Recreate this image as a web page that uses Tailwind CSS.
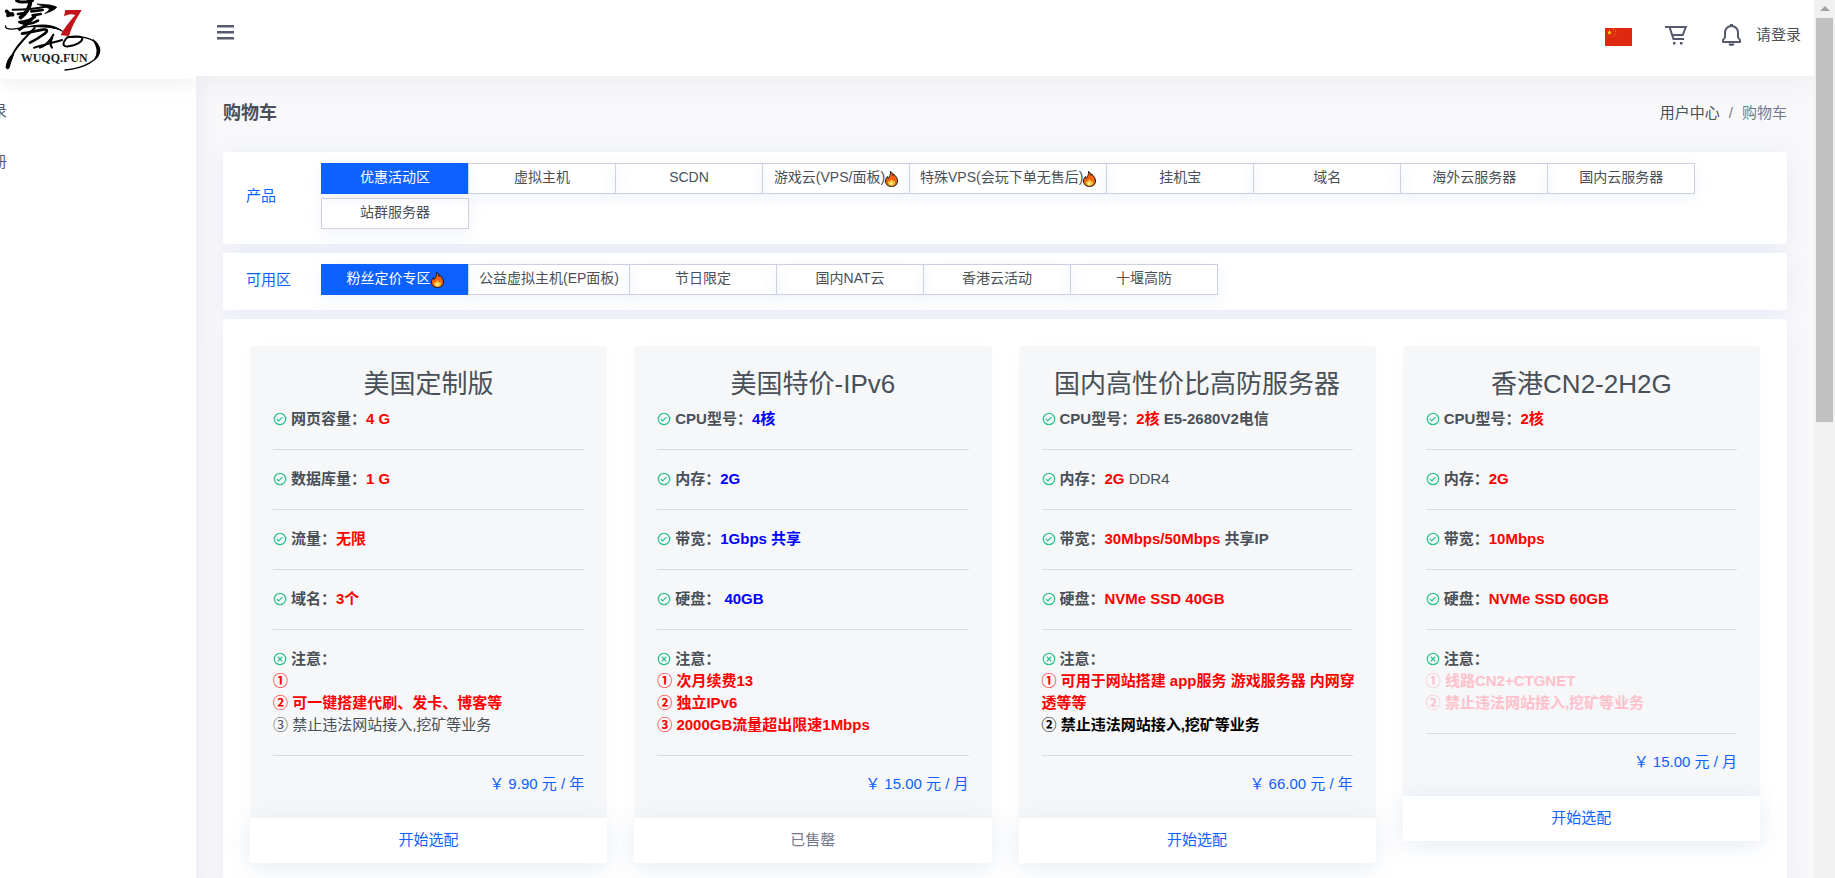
<!DOCTYPE html>
<html lang="zh-CN">
  <head>
    <meta charset="utf-8" />
    <meta content="width=device-width, initial-scale=1" name="viewport" />
    <title>购物车</title>
    <script src="https://cdn.jsdelivr.net/npm/@tailwindcss/browser@4"></script>
    <style>
      body {
        font-family: "Liberation Sans", "Noto Sans CJK SC", sans-serif;
      }
    </style>
  </head>

  <body class="flex h-screen overflow-hidden bg-[#f8f8fb] text-[15px] leading-[22px] text-[#495057]">
    <!-- shared icons -->
    <svg class="hidden">
      <symbol id="check" viewBox="1 1 22 22">
        <path d="M12 2a10 10 0 1 0 0 20 10 10 0 0 0 0-20zm0 18a8 8 0 1 1 0-16 8 8 0 0 1 0 16z" />
        <path d="m10 13.600-2.300-2.300-1.400 1.400 3.700 3.700 6.700-6.700-1.400-1.400z" />
      </symbol>
      <symbol id="cross" viewBox="1 1 22 22">
        <path d="M12 2a10 10 0 1 0 0 20 10 10 0 0 0 0-20zm0 18a8 8 0 1 1 0-16 8 8 0 0 1 0 16z" />
        <path d="M14.800 7.800 12 10.600 9.200 7.800 7.800 9.200l2.800 2.800-2.800 2.800 1.400 1.400 2.800-2.800 2.800 2.800 1.400-1.400-2.800-2.800 2.800-2.800z" />
      </symbol>
      <symbol id="fire" viewBox="0 0 26 32">
        <path d="M11 1c4 2 5 5 5 8 1-1 1-2 1-3 5 4 8 9 8 14 0 7-5 11-12 11S1 27 1 20c0-4 2-7 4-9 0 2 0 3 1 4 3-4 6-8 5-14z" fill="#f7630c" stroke="#1b1b1b" stroke-width="2" />
        <path d="M7 20c1 1 2 1 3 0 1-1 2-2 3-4 1 2 2 3 4 5 1 0 1-1 2-2 2 6 0 10-6 10S5 25 7 20z" fill="#ffc83d" />
        <path d="M12 22c2 2 4 3 3 5-1 2-4 2-5 0s1-3 2-5z" fill="#fff3a0" />
      </symbol>
    </svg>

    <aside class="flex w-[196px] shrink-0 flex-col overflow-hidden bg-white">
      <a href="#" class="block h-[79px] shrink-0 bg-white shadow-[0_6px_20px_rgba(0,0,0,0.06)]">
        <svg class="h-[72px] w-[105px]" viewBox="0 0 315 216" fill="none" stroke="#000" stroke-linecap="round" stroke-linejoin="round">
          <path d="M50 2C62 9 82 6 98 1" stroke-width="9" />
          <path d="M38 29C76 29 120 24 150 17" stroke-width="6" />
          <path d="M112 12C134 13 158 15 170 21C168 28 154 34 134 41C146 33 150 28 146 25C136 20 122 18 112 12Z" fill="#000" stroke-width="2" />
          <path d="M92 2C90 18 80 38 62 52" stroke-width="12" />
          <path d="M20 34C24 40 30 44 38 44M24 46L36 42" stroke-width="11" />
          <path d="M54 42L74 39M94 34L128 30M98 46L122 42" stroke-width="8" />
          <path d="M105 50C92 60 76 66 58 66C76 74 98 72 114 62" stroke-width="8" />
          <path d="M17 78C14 92 46 88 84 80" stroke-width="4" />
          <path d="M84 80C120 73 158 70 188 94C166 80 120 80 84 80Z" fill="#000" stroke-width="3" />
          <path d="M100 52C86 70 72 80 58 88" stroke-width="9" />
          <path d="M66 101C86 98 106 93 128 89C148 86 142 96 128 105C116 114 102 122 90 128" stroke-width="8" />
          <path d="M104 84C80 108 54 134 42 156C34 172 28 186 24 200" stroke-width="6" />
          <path d="M36 164C26 172 20 188 18 202C20 208 26 208 28 202C30 190 36 178 40 164Z" fill="#000" stroke-width="3" />
          <path d="M102 143C130 136 156 128 186 120" stroke-width="6" />
          <path d="M160 104C150 122 138 136 120 143M157 112C152 124 148 134 156 143" stroke-width="6" />
          <path d="M202 112C186 128 186 142 206 139C228 136 246 126 247 116C248 108 224 108 202 112" stroke-width="6" />
          <path d="M214 112C256 106 294 120 299 148C302 178 252 206 195 210" stroke-width="4" />
          <path d="M280 120C302 138 302 162 284 178C296 160 294 140 280 120Z" fill="#000" stroke-width="4" />
          <path d="M196 30L245 30L238 42C226 60 215 82 207 108L182 106C190 88 206 68 226 45C212 40 202 44 192 49Z" fill="#c01418" stroke="none" />
          <text x="62" y="187" fill="#222" stroke="none" font-size="36" font-weight="700" font-family="Liberation Serif, serif">WUQQ.FUN</text>
        </svg>
      </a>
      <nav class="-ml-[23px] flex flex-col gap-[29px] pt-[21px] text-[#545a6d]">
        <a href="#">登录</a>
        <a href="#">注册</a>
      </nav>
    </aside>

    <div class="flex min-w-0 flex-1 flex-col overflow-hidden">
      <header class="relative z-10 flex h-[76px] shrink-0 items-center bg-white pr-[13px] pl-[21px] shadow-[0_8px_24px_rgba(0,0,0,0.04)]">
        <button type="button" aria-label="菜单" class="mb-3">
          <svg class="h-[18px] w-[17px]" viewBox="0 0 17 18" fill="#555b6d">
            <path d="M0 2h17v2.400H0zM0 8h17v2.400H0zM0 14h17v2.400H0z" />
          </svg>
        </button>
        <div class="ml-auto flex items-center pb-[6px]">
          <button type="button" aria-label="语言" class="mr-[33px]">
            <svg class="mt-1 h-[18px] w-[27px]" viewBox="0 0 30 20">
              <path fill="#de2910" d="M0 0h30v20H0z" />
              <path fill="#ffde00" d="m5 2 .7 2.100h2.200L6.100 5.400l.7 2.100L5 6.200 3.200 7.500l.7-2.100-1.800-1.300h2.200z" />
              <path fill="#ffde00" d="M9.500 1.200h1v1h-1zM11.500 3.200h1v1h-1zM11.500 6h1v1h-1zM9.500 8.200h1v1h-1z" />
            </svg>
          </button>
          <a href="#" aria-label="购物车" class="mr-[33px]">
            <svg class="h-[22px] w-[23px]" viewBox="0 0 23 22" fill="none" stroke="#555b6d" stroke-width="2">
              <path d="M0 3h4.500l4 12H19M4.500 3h16.300l-3 8H7.500" />
              <path d="M8 18h2.500v2.500H8zM15 18h2.500v2.500H15z" fill="#555b6d" stroke="none" />
            </svg>
          </a>
          <button type="button" aria-label="通知" class="mr-[14px]">
            <svg class="h-[22px] w-[21px]" viewBox="0 0 21 22" fill="none" stroke="#555b6d" stroke-width="2">
              <path d="M10.500 2c-4 0-6.500 3-6.500 6.500v5L2 16v2h17v-2l-2-2.500v-5C17 5 14.500 2 10.500 2z" stroke-linejoin="round" />
              <path d="M7.500 19.500a3 2.500 0 0 0 6 0zM9 0h3v2H9z" fill="#555b6d" stroke="none" />
            </svg>
          </button>
          <a href="#">请登录</a>
        </div>
      </header>

      <main class="flex min-h-0 flex-1 flex-col gap-[9px] px-[27px] shadow-[inset_24px_0_24px_-24px_rgba(18,38,90,0.08)]">
        <div class="mb-[6px] flex items-center justify-between pt-[25px] pb-3">
          <h4 class="text-[18px] leading-6 font-bold">购物车</h4>
          <nav class="flex gap-[9px]">
            <a href="#">用户中心</a>
            <span class="text-[#74788d]">/</span>
            <span class="text-[#74788d]">购物车</span>
          </nav>
        </div>

        <section class="flex shrink-0 items-center bg-white px-[23px] pt-[11px] pb-[15px] shadow-[0_4px_24px_rgba(40,90,200,0.07)]">
          <h5 class="w-[75px] shrink-0 text-[#0d61ff]">产品</h5>
          <div class="flex flex-wrap gap-y-1 pl-px text-[14px]">
            <button type="button" class="-ml-px h-[31px] min-w-[148px] border border-[#0d61ff] bg-[#0d61ff] px-2.5 pb-1 text-white shadow-[0_4px_16px_rgba(40,90,200,0.07)]">优惠活动区</button>
            <button type="button" class="-ml-px h-[31px] min-w-[148px] border border-[#ced0e2] px-2.5 pb-1 shadow-[0_4px_16px_rgba(40,90,200,0.07)]">虚拟主机</button>
            <button type="button" class="-ml-px h-[31px] min-w-[148px] border border-[#ced0e2] px-2.5 pb-1 shadow-[0_4px_16px_rgba(40,90,200,0.07)]">SCDN</button>
            <button type="button" class="-ml-px flex h-[31px] min-w-[148px] items-center justify-center border border-[#ced0e2] px-2.5 pb-1 shadow-[0_4px_16px_rgba(40,90,200,0.07)]">游戏云(VPS/面板)<svg class="mt-1 h-4 w-[13px]"><use href="#fire" /></svg></button>
            <button type="button" class="-ml-px flex h-[31px] min-w-[148px] items-center justify-center border border-[#ced0e2] px-2.5 pb-1 shadow-[0_4px_16px_rgba(40,90,200,0.07)]">特殊VPS(会玩下单无售后)<svg class="mt-1 h-4 w-[13px]"><use href="#fire" /></svg></button>
            <button type="button" class="-ml-px h-[31px] min-w-[148px] border border-[#ced0e2] px-2.5 pb-1 shadow-[0_4px_16px_rgba(40,90,200,0.07)]">挂机宝</button>
            <button type="button" class="-ml-px h-[31px] min-w-[148px] border border-[#ced0e2] px-2.5 pb-1 shadow-[0_4px_16px_rgba(40,90,200,0.07)]">域名</button>
            <button type="button" class="-ml-px h-[31px] min-w-[148px] border border-[#ced0e2] px-2.5 pb-1 shadow-[0_4px_16px_rgba(40,90,200,0.07)]">海外云服务器</button>
            <button type="button" class="-ml-px h-[31px] min-w-[148px] border border-[#ced0e2] px-2.5 pb-1 shadow-[0_4px_16px_rgba(40,90,200,0.07)]">国内云服务器</button>
            <button type="button" class="-ml-px h-[31px] min-w-[148px] border border-[#ced0e2] px-2.5 pb-1 shadow-[0_4px_16px_rgba(40,90,200,0.07)]">站群服务器</button>
          </div>
        </section>

        <section class="flex shrink-0 items-center bg-white px-[23px] pt-[11px] pb-[15px] shadow-[0_4px_24px_rgba(40,90,200,0.07)]">
          <h5 class="w-[75px] shrink-0 text-[#0d61ff]">可用区</h5>
          <div class="flex flex-wrap gap-y-1 pl-px text-[14px]">
            <button type="button" class="-ml-px flex h-[31px] min-w-[148px] items-center justify-center border border-[#0d61ff] bg-[#0d61ff] px-2.5 pb-1 text-white shadow-[0_4px_16px_rgba(40,90,200,0.07)]">粉丝定价专区<svg class="mt-1 h-4 w-[13px]"><use href="#fire" /></svg></button>
            <button type="button" class="-ml-px h-[31px] min-w-[148px] border border-[#ced0e2] px-2.5 pb-1 shadow-[0_4px_16px_rgba(40,90,200,0.07)]">公益虚拟主机(EP面板)</button>
            <button type="button" class="-ml-px h-[31px] min-w-[148px] border border-[#ced0e2] px-2.5 pb-1 shadow-[0_4px_16px_rgba(40,90,200,0.07)]">节日限定</button>
            <button type="button" class="-ml-px h-[31px] min-w-[148px] border border-[#ced0e2] px-2.5 pb-1 shadow-[0_4px_16px_rgba(40,90,200,0.07)]">国内NAT云</button>
            <button type="button" class="-ml-px h-[31px] min-w-[148px] border border-[#ced0e2] px-2.5 pb-1 shadow-[0_4px_16px_rgba(40,90,200,0.07)]">香港云活动</button>
            <button type="button" class="-ml-px h-[31px] min-w-[148px] border border-[#ced0e2] px-2.5 pb-1 shadow-[0_4px_16px_rgba(40,90,200,0.07)]">十堰高防</button>
          </div>
        </section>

        <section class="grid flex-1 shrink-0 grid-cols-4 items-start gap-[27px] rounded-t bg-white p-[27px] shadow-[0_4px_24px_rgba(40,90,200,0.06)]">
          <article class="rounded bg-[#f5f7f9] shadow-[0_4px_24px_rgba(0,0,0,0.02)]">
            <div class="px-[23px] pt-[22px] pb-6">
              <h3 class="mb-2 text-center text-[26px] leading-8">美国定制版</h3>
              <p class="font-bold"><svg class="mr-1 inline size-[14px] align-[-2px]" fill="#34c38f"><use href="#check" /></svg>网页容量：<span class="text-[#f00]">4 G</span></p>
              <hr class="mt-[19px] mb-[18px] border-[#dadce0]" />
              <p class="font-bold"><svg class="mr-1 inline size-[14px] align-[-2px]" fill="#34c38f"><use href="#check" /></svg>数据库量：<span class="text-[#f00]">1 G</span></p>
              <hr class="mt-[19px] mb-[18px] border-[#dadce0]" />
              <p class="font-bold"><svg class="mr-1 inline size-[14px] align-[-2px]" fill="#34c38f"><use href="#check" /></svg>流量：<span class="text-[#f00]">无限</span></p>
              <hr class="mt-[19px] mb-[18px] border-[#dadce0]" />
              <p class="font-bold"><svg class="mr-1 inline size-[14px] align-[-2px]" fill="#34c38f"><use href="#check" /></svg>域名：<span class="text-[#f00]">3个</span></p>
              <hr class="mt-[19px] mb-[18px] border-[#dadce0]" />
              <p class="font-bold"><svg class="mr-1 inline size-[14px] align-[-2px]" fill="#34c38f"><use href="#cross" /></svg>注意：</p>
              <p class="font-bold text-[#f00]">①</p>
              <p class="font-bold text-[#f00]">② 可一键搭建代刷、发卡、博客等</p>
              <p>③ 禁止违法网站接入,挖矿等业务</p>
              <hr class="mt-[19px] mb-[18px] border-[#dadce0]" />
              <p class="text-right leading-5 text-[#0d61ff]">￥ 9.90 元 / 年</p>
            </div>
            <a href="#" class="block bg-white pt-[11px] pb-3 text-center text-[#0d61ff] shadow-[0_4px_24px_rgba(40,90,180,0.1)]">开始选配</a>
          </article>

          <article class="rounded bg-[#f5f7f9] shadow-[0_4px_24px_rgba(0,0,0,0.02)]">
            <div class="px-[23px] pt-[22px] pb-6">
              <h3 class="mb-2 text-center text-[26px] leading-8">美国特价-IPv6</h3>
              <p class="font-bold"><svg class="mr-1 inline size-[14px] align-[-2px]" fill="#34c38f"><use href="#check" /></svg>CPU型号：<span class="text-[#00f]">4核</span></p>
              <hr class="mt-[19px] mb-[18px] border-[#dadce0]" />
              <p class="font-bold"><svg class="mr-1 inline size-[14px] align-[-2px]" fill="#34c38f"><use href="#check" /></svg>内存：<span class="text-[#00f]">2G</span></p>
              <hr class="mt-[19px] mb-[18px] border-[#dadce0]" />
              <p class="font-bold"><svg class="mr-1 inline size-[14px] align-[-2px]" fill="#34c38f"><use href="#check" /></svg>带宽：<span class="text-[#00f]">1Gbps 共享</span></p>
              <hr class="mt-[19px] mb-[18px] border-[#dadce0]" />
              <p class="font-bold"><svg class="mr-1 inline size-[14px] align-[-2px]" fill="#34c38f"><use href="#check" /></svg>硬盘：<span class="text-[#00f]"> 40GB</span></p>
              <hr class="mt-[19px] mb-[18px] border-[#dadce0]" />
              <p class="font-bold"><svg class="mr-1 inline size-[14px] align-[-2px]" fill="#34c38f"><use href="#cross" /></svg>注意：</p>
              <p class="font-bold text-[#f00]">① 次月续费13</p>
              <p class="font-bold text-[#f00]">② 独立IPv6</p>
              <p class="font-bold text-[#f00]">③ 2000GB流量超出限速1Mbps</p>
              <hr class="mt-[19px] mb-[18px] border-[#dadce0]" />
              <p class="text-right leading-5 text-[#0d61ff]">￥ 15.00 元 / 月</p>
            </div>
            <a class="block bg-white pt-[11px] pb-3 text-center text-[#74788d] shadow-[0_4px_24px_rgba(40,90,180,0.1)]">已售罄</a>
          </article>

          <article class="rounded bg-[#f5f7f9] shadow-[0_4px_24px_rgba(0,0,0,0.02)]">
            <div class="px-[23px] pt-[22px] pb-6">
              <h3 class="mb-2 text-center text-[26px] leading-8">国内高性价比高防服务器</h3>
              <p class="font-bold"><svg class="mr-1 inline size-[14px] align-[-2px]" fill="#34c38f"><use href="#check" /></svg>CPU型号：<span class="text-[#f00]">2核</span> E5-2680V2电信</p>
              <hr class="mt-[19px] mb-[18px] border-[#dadce0]" />
              <p><b><svg class="mr-1 inline size-[14px] align-[-2px]" fill="#34c38f"><use href="#check" /></svg>内存：<span class="text-[#f00]">2G</span></b> DDR4</p>
              <hr class="mt-[19px] mb-[18px] border-[#dadce0]" />
              <p class="font-bold"><svg class="mr-1 inline size-[14px] align-[-2px]" fill="#34c38f"><use href="#check" /></svg>带宽：<span class="text-[#f00]">30Mbps/50Mbps</span> 共享IP</p>
              <hr class="mt-[19px] mb-[18px] border-[#dadce0]" />
              <p class="font-bold"><svg class="mr-1 inline size-[14px] align-[-2px]" fill="#34c38f"><use href="#check" /></svg>硬盘：<span class="text-[#f00]">NVMe SSD 40GB</span></p>
              <hr class="mt-[19px] mb-[18px] border-[#dadce0]" />
              <p class="font-bold"><svg class="mr-1 inline size-[14px] align-[-2px]" fill="#34c38f"><use href="#cross" /></svg>注意：</p>
              <p class="font-bold whitespace-nowrap text-[#f00]">① 可用于网站搭建 app服务 游戏服务器 内网穿<br />透等等</p>
              <p class="font-bold text-black">② 禁止违法网站接入,挖矿等业务</p>
              <hr class="mt-[19px] mb-[18px] border-[#dadce0]" />
              <p class="text-right leading-5 text-[#0d61ff]">￥ 66.00 元 / 年</p>
            </div>
            <a href="#" class="block bg-white pt-[11px] pb-3 text-center text-[#0d61ff] shadow-[0_4px_24px_rgba(40,90,180,0.1)]">开始选配</a>
          </article>

          <article class="rounded bg-[#f5f7f9] shadow-[0_4px_24px_rgba(0,0,0,0.02)]">
            <div class="px-[23px] pt-[22px] pb-6">
              <h3 class="mb-2 text-center text-[26px] leading-8">香港CN2-2H2G</h3>
              <p class="font-bold"><svg class="mr-1 inline size-[14px] align-[-2px]" fill="#34c38f"><use href="#check" /></svg>CPU型号：<span class="text-[#f00]">2核</span></p>
              <hr class="mt-[19px] mb-[18px] border-[#dadce0]" />
              <p class="font-bold"><svg class="mr-1 inline size-[14px] align-[-2px]" fill="#34c38f"><use href="#check" /></svg>内存：<span class="text-[#f00]">2G</span></p>
              <hr class="mt-[19px] mb-[18px] border-[#dadce0]" />
              <p class="font-bold"><svg class="mr-1 inline size-[14px] align-[-2px]" fill="#34c38f"><use href="#check" /></svg>带宽：<span class="text-[#f00]">10Mbps</span></p>
              <hr class="mt-[19px] mb-[18px] border-[#dadce0]" />
              <p class="font-bold"><svg class="mr-1 inline size-[14px] align-[-2px]" fill="#34c38f"><use href="#check" /></svg>硬盘：<span class="text-[#f00]">NVMe SSD 60GB</span></p>
              <hr class="mt-[19px] mb-[18px] border-[#dadce0]" />
              <p class="font-bold"><svg class="mr-1 inline size-[14px] align-[-2px]" fill="#34c38f"><use href="#cross" /></svg>注意：</p>
              <p class="font-bold text-[#ffc0cb]">① 线路CN2+CTGNET</p>
              <p class="font-bold text-[#ffc0cb]">② 禁止违法网站接入,挖矿等业务</p>
              <hr class="mt-[19px] mb-[18px] border-[#dadce0]" />
              <p class="text-right leading-5 text-[#0d61ff]">￥ 15.00 元 / 月</p>
            </div>
            <a href="#" class="block bg-white pt-[11px] pb-3 text-center text-[#0d61ff] shadow-[0_4px_24px_rgba(40,90,180,0.1)]">开始选配</a>
          </article>
        </section>
      </main>
    </div>

    <!-- scrollbar -->
    <div class="z-20 flex w-[21px] shrink-0 flex-col items-center bg-[#f1f1f1]">
      <svg class="h-[18px] w-[10px] shrink-0" viewBox="0 0 10 18"><path d="M0 11h10L5 6z" fill="#a3a3a3" /></svg>
      <div class="h-[46%] w-[17px] bg-[#c1c1c1]"></div>
    </div>
  </body>
</html>
